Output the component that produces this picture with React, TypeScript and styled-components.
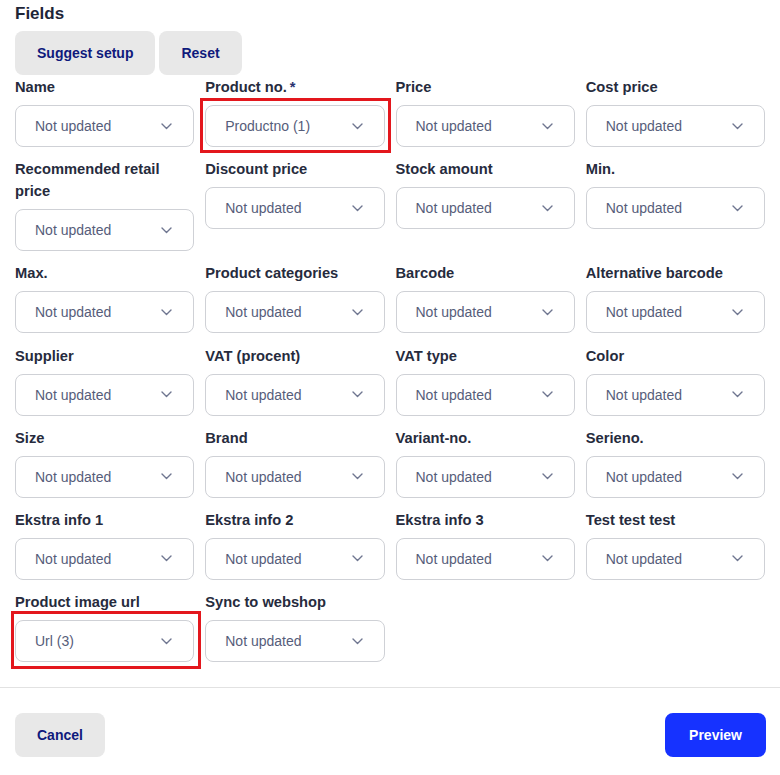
import React from "react";
import styled, { createGlobalStyle } from "styled-components";

const Global = createGlobalStyle`
  html, body { margin: 0; padding: 0; background: #fff; }
  body { font-family: "Liberation Sans", Arial, sans-serif; }
  * { box-sizing: border-box; }
`;

const Page = styled.div`
  width: 780px;
  height: 775px;
  position: relative;
  display: flex;
  flex-direction: column;
`;

const Body = styled.div`
  padding: 0 15px;
`;

const Title = styled.h2`
  margin: 0 0 3px;
  font-size: 17px;
  line-height: 28px;
  font-weight: 700;
  color: #1e2538;
`;

const ButtonRow = styled.div`
  display: flex;
  gap: 4px;
  margin-bottom: 1px;
`;

const Button = styled.button<{ $primary?: boolean }>`
  height: 44px;
  padding: 0 ${(p) => (p.$primary ? 24 : 22)}px;
  border: none;
  border-radius: 8px;
  font-family: "Liberation Sans", Arial, sans-serif;
  font-size: 14px;
  font-weight: 700;
  background: ${(p) => (p.$primary ? "#1632ff" : "#e8e8e8")};
  color: ${(p) => (p.$primary ? "#ffffff" : "#0f1a7c")};
  cursor: pointer;
`;

const Grid = styled.div`
  display: grid;
  grid-template-columns: repeat(4, 1fr);
  column-gap: 11px;
  row-gap: 11.2px;
  align-items: start;
`;

const Field = styled.div`
  display: flex;
  flex-direction: column;
  position: relative;
`;

const Label = styled.div`
  font-size: 14.7px;
  line-height: 22px;
  font-weight: 700;
  color: #262b3d;
  margin-bottom: 7px;
`;

const Req = styled.span`
  color: #2a3170;
  margin-left: 3px;
`;

const Select = styled.div`
  height: 42px;
  border: 1px solid #cfd1d6;
  border-radius: 8px;
  display: flex;
  align-items: center;
  justify-content: space-between;
  padding: 0 21px 0 19px;
  font-size: 14px;
  color: #565d7a;
  background: #fff;
`;

const Highlight = styled.div<{ $t: number; $l: number; $r: number; $b: number }>`
  position: absolute;
  top: ${(p) => p.$t}px;
  left: ${(p) => p.$l}px;
  right: ${(p) => p.$r}px;
  bottom: ${(p) => p.$b}px;
  border: 3px solid #e3171d;
  pointer-events: none;
`;

const Divider = styled.div`
  height: 1px;
  background: #e2e2e2;
  margin-top: 25px;
`;

const Footer = styled.div`
  display: flex;
  justify-content: space-between;
  padding: 25px 14px 0 15px;
`;

const Chevron = () => (
  <svg width="11" height="7" viewBox="0 0 11 7" fill="none">
    <path d="M1 1l4.5 4.5L10 1" stroke="#6f7690" strokeWidth="1.4" strokeLinecap="round" strokeLinejoin="round" />
  </svg>
);

type F = { label: string; value?: string; required?: boolean; hl?: [number, number, number, number] };

const fields: F[] = [
  { label: "Name" },
  { label: "Product no.", value: "Productno (1)", required: true, hl: [22, -5, -6, -6] },
  { label: "Price" },
  { label: "Cost price" },
  { label: "Recommended retail price" },
  { label: "Discount price" },
  { label: "Stock amount" },
  { label: "Min." },
  { label: "Max." },
  { label: "Product categories" },
  { label: "Barcode" },
  { label: "Alternative barcode" },
  { label: "Supplier" },
  { label: "VAT (procent)" },
  { label: "VAT type" },
  { label: "Color" },
  { label: "Size" },
  { label: "Brand" },
  { label: "Variant-no." },
  { label: "Serieno." },
  { label: "Ekstra info 1" },
  { label: "Ekstra info 2" },
  { label: "Ekstra info 3" },
  { label: "Test test test" },
  { label: "Product image url", value: "Url (3)", hl: [20, -4, -7, -7] },
  { label: "Sync to webshop" },
];

export default function App() {
  return (
    <Page>
      <Global />
      <Body>
        <Title>Fields</Title>
        <ButtonRow>
          <Button>Suggest setup</Button>
          <Button>Reset</Button>
        </ButtonRow>
        <Grid>
          {fields.map((f) => (
            <Field key={f.label}>
              <Label>
                {f.label}
                {f.required && <Req>*</Req>}
              </Label>
              <Select>
                <span>{f.value ?? "Not updated"}</span>
                <Chevron />
              </Select>
              {f.hl && <Highlight $t={f.hl[0]} $l={f.hl[1]} $r={f.hl[2]} $b={f.hl[3]} />}
            </Field>
          ))}
        </Grid>
      </Body>
      <Divider />
      <Footer>
        <Button>Cancel</Button>
        <Button $primary>Preview</Button>
      </Footer>
    </Page>
  );
}
